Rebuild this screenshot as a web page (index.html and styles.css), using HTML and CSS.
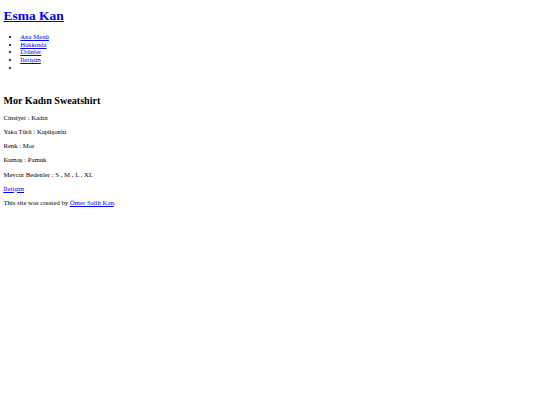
FILE: index.html
```html
<!DOCTYPE html>
<html lang="tr">
<head>
<meta charset="utf-8">
<title>Esma Kan</title>
<link rel="stylesheet" href="styles.css">
</head>
<body>
<header class="site-header">
  <h1 class="site-title"><a href="#">Esma Kan</a></h1>
  <nav class="site-nav">
    <ul class="nav-list">
      <li><a href="#">Ana Menü</a></li>
      <li><a href="#">Hakkında</a></li>
      <li><a href="#">Ürünler</a></li>
      <li><a href="#">İletişim</a></li>
      <li></li>
    </ul>
  </nav>
</header>
<main class="content">
  <div class="spacer">&nbsp;</div>
  <h2 class="product-title">Mor Kadın Sweatshirt</h2>
  <p>Cinsiyet : Kadın</p>
  <p>Yaka Türü : Kapüşonlu</p>
  <p>Renk : Mor</p>
  <p>Kumaş : Pamuk</p>
  <p>Mevcut Bedenler : S , M , L , XL</p>
  <p><a href="#">İletişim</a></p>
</main>
<footer class="site-footer">
  <p>This site was created by <a href="#">Ömer Salih Kan</a>.</p>
</footer>
</body>
</html>
```

FILE: styles.css
```css
html {
  background: #fff;
}
body {
  margin: 0;
  padding: 0 3.375px;
  font-family: "Liberation Serif", "Times New Roman", serif;
  font-size: 6.75px;
  line-height: 7.65px;
  color: #000;
}
a {
  color: #0000ee;
}
.site-title {
  font-size: 13.5px;
  line-height: 15.53px;
  margin: 8px 0 9.65px;
  font-weight: bold;
}
.nav-list {
  margin: 9.05px 0 6.75px;
  padding-left: 16.875px;
  list-style: disc;
}
.spacer {
  height: 7.65px;
}
.product-title {
  font-size: 10.125px;
  line-height: 11.64px;
  margin: 8.7px 0 8px;
  font-weight: bold;
}
p {
  margin: 6.45px 0;
}
```
